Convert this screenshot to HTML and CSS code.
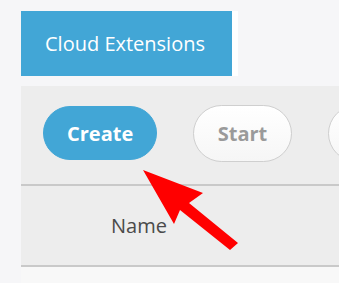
FILE: index.html
```html
<!DOCTYPE html>
<html lang="en">
<head>
  <meta charset="UTF-8">
  <meta name="viewport" content="width=device-width, initial-scale=1.0">
  <title>Cloud Extensions</title>
  <link rel="stylesheet" href="styles.css">
</head>
<body>
  <div class="page">
    <div class="tab-row">
      <div class="tab">Cloud Extensions</div>
    </div>

    <div class="panel">
      <div class="toolbar">
        <button class="btn btn-primary">Create</button>
        <button class="btn btn-start">Start</button>
        <button class="btn btn-more" aria-label="Stop"></button>
      </div>
      <div class="table-head">
        <div class="col-name">Name</div>
      </div>
      <div class="table-body"></div>
    </div>
  </div>

  <svg class="arrow" width="339" height="283" viewBox="0 0 339 283">
    <polygon points="143,170 203,193 189,203 238,243 230,250 180,210 174,224" fill="#ff0000"/>
  </svg>
</body>
</html>
```

FILE: styles.css
```css
body {
  margin: 0;
  background-color: #f6f6f8;
  font-family: "Open Sans", Lato, sans-serif;
  overflow: hidden;
  height: 283px;
}
.page {
  padding: 11px 0 0 21px;
}
.tab-row {
  display: flex;
}
.tab {
  width: 217px;
  height: 65px;
  box-sizing: border-box;
  padding-left: 24px;
  display: flex;
  align-items: center;
  background-color: #42a6d6;
  border-right: 6px solid #ffffff;
  color: white;
  font-size: 20px;
}
.panel {
  margin-top: 10px;
  background-color: #ededed;
}
.toolbar {
  display: flex;
  align-items: center;
  gap: 36px;
  height: 98px;
  padding-left: 22px;
  box-sizing: border-box;
  padding-bottom: 4px;
  white-space: nowrap;
  overflow: hidden;
}
.btn {
  flex: none;
  height: 57px;
  padding: 0 23px;
  border: 1px solid #cfcfcf;
  border-radius: 29px;
  background: linear-gradient(#ffffff, #f6f6f6);
  color: #9a9a9a;
  font-family: inherit;
  font-size: 20px;
  font-weight: bold;
}
.btn-primary {
  height: 54px;
  width: 114px;
  background: #42a6d6;
  border-color: #42a6d6;
  color: white;
}
.btn-start {
  width: 99px;
}
.btn-more {
  width: 99px;
}
.table-head {
  height: 79px;
  border-top: 2px solid #c9c9c9;
  border-bottom: 2px solid #c9c9c9;
  display: flex;
  align-items: center;
  padding-left: 90px;
}
.col-name {
  color: #4a4a4a;
  font-size: 20px;
}
.table-body {
  height: 16px;
  background-color: #f8f8f8;
}
.arrow {
  position: absolute;
  left: 0;
  top: 0;
}
```
